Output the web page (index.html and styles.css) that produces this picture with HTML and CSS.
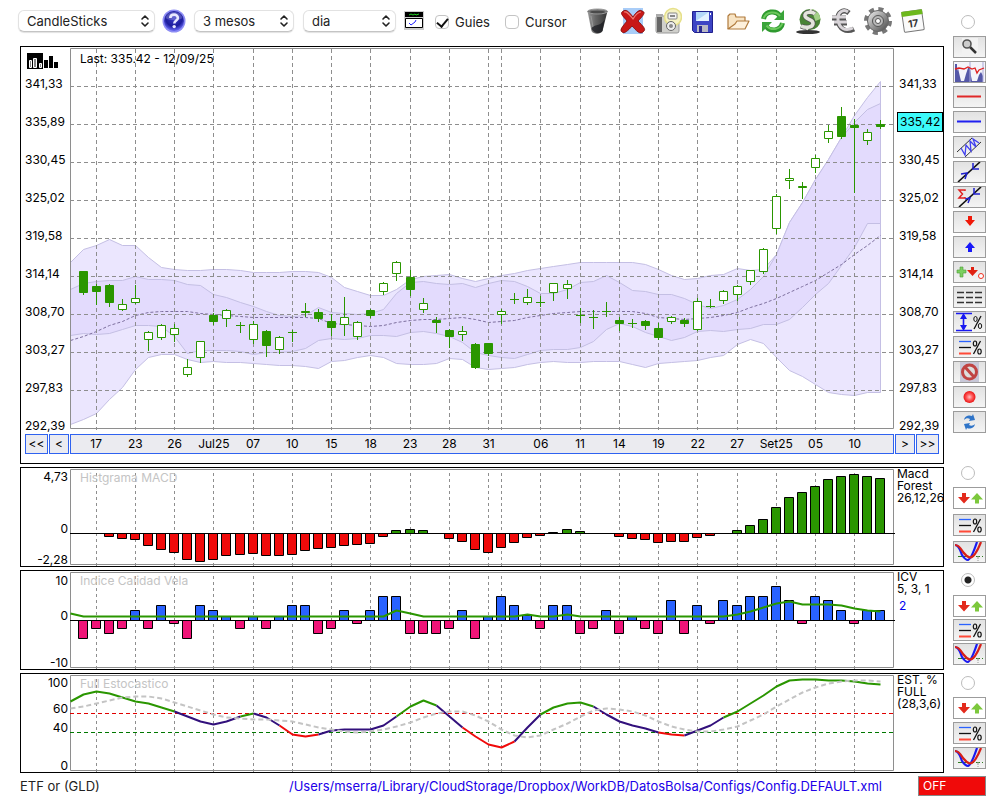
FILE: index.html
```
<!DOCTYPE html>
<html lang="ca">
<head>
    <meta charset="UTF-8">
    <meta name="viewport" content="width=device-width, initial-scale=1.0">
    <title>ETF or (GLD)</title>
    <link rel="stylesheet" href="styles.css">
</head>
<body>
    <!-- shared symbols -->
    <svg class="defs" width="0" height="0" aria-hidden="true">
        <defs>
            <linearGradient id="steel" x1="0" y1="0" x2="1" y2="1">
                <stop offset="0" stop-color="#f4f4f4"/><stop offset=".5" stop-color="#9a9a9a"/><stop offset="1" stop-color="#444"/>
            </linearGradient>
            <linearGradient id="bin" x1="0" x2="1">
                <stop offset="0" stop-color="#999"/><stop offset=".4" stop-color="#666"/><stop offset="1" stop-color="#333"/>
            </linearGradient>
            <linearGradient id="leaf" x1="0" y1="0" x2="0" y2="1">
                <stop offset="0" stop-color="#6fd05a"/><stop offset="1" stop-color="#1c8a1c"/>
            </linearGradient>
            <radialGradient id="ball" cx=".5" cy=".35" r=".6">
                <stop offset="0" stop-color="#3c3cc8"/><stop offset=".7" stop-color="#1c1c9c"/><stop offset="1" stop-color="#5c5ce8"/>
            </radialGradient>
            <radialGradient id="dot">
                <stop offset="0" stop-color="#ffc0c0"/><stop offset=".5" stop-color="#ff5a5a"/><stop offset="1" stop-color="#e81414"/>
            </radialGradient>
            <symbol id="chevrons" viewBox="0 0 10 14">
                <path d="M2 5 5 2l3 3M2 9l3 3 3-3" fill="none" stroke="#222" stroke-width="1.6" stroke-linecap="round" stroke-linejoin="round"/>
            </symbol>
            <symbol id="updown" viewBox="0 0 31 20">
                <path d="M8 5h4v4h4L10 15.500 4 9h4z" fill="#e32a1c"/>
                <path d="M21 15.500v-4h-4L23 5l6 6.500h-4v4z" fill="#7cc83c"/>
            </symbol>
            <symbol id="levels" viewBox="0 0 31 20">
                <path d="M5 4.500h12" stroke="#2a62ff" stroke-width="1.300"/>
                <path d="M5 10.500h12" stroke="#111" stroke-width="1.300"/>
                <path d="M5 16.500h12" stroke="#ff4a38" stroke-width="2"/>
                <path d="M26.500 4 19.500 17" stroke="#111" stroke-width="1.300"/>
                <ellipse cx="21" cy="6.500" rx="1.700" ry="2.500" fill="none" stroke="#111" stroke-width="1.200"/>
                <ellipse cx="25.500" cy="14.500" rx="1.700" ry="2.500" fill="none" stroke="#111" stroke-width="1.200"/>
            </symbol>
            <symbol id="curves" viewBox="0 0 31 20">
                <path d="M4 14.500h25" stroke="#2f7d1f" stroke-dasharray="4 2"/>
                <path d="M24 14v5" stroke="#999" stroke-dasharray="3 1"/>
                <path d="M1 3c4 0 5 5 7 10 2 3 4 5 6 5 3-1 6-9 9-18" fill="none" stroke="#1a1af0" stroke-width="2.200"/>
                <path d="M1 3c4 0 6 4 8 7 3 4 5 5 7 5.500 4 0 8-8 11-15.500" fill="none" stroke="#d82018" stroke-width="2.200"/>
            </symbol>
        </defs>
    </svg>

    <div class="app">
        <div class="workspace">
            <main class="main">
                <div class="toolbar">
                    <span class="picker picker-type">
                        <select aria-label="Tipus"><option>CandleSticks</option><option>Bars</option></select>
                        <svg><use href="#chevrons"/></svg>
                    </span>
                    <button class="tool" aria-label="Ajuda">
                        <svg width="24" height="24" viewBox="0 0 24 24">
                            <circle cx="12" cy="12" r="11.500" fill="#8c8cf4"/>
                            <circle cx="12" cy="12" r="10" fill="url(#ball)"/>
                            <path d="M3.500 9C5 1 19 1 20.500 9 16 12 8 12 3.500 9z" fill="#fff" opacity=".2"/>
                            <path d="M8.300 9c0-4.500 7.600-4.500 7.600 0 0 2.500-3.600 2.600-3.600 5.500" fill="none" stroke="#e8e8ff" stroke-width="2.600"/>
                            <circle cx="12.200" cy="17.600" r="1.700" fill="#e8e8ff"/>
                        </svg>
                    </button>
                    <span class="picker picker-range">
                        <select aria-label="Periode"><option>3 mesos</option><option>6 mesos</option></select>
                        <svg><use href="#chevrons"/></svg>
                    </span>
                    <span class="picker picker-step">
                        <select aria-label="Interval"><option>dia</option><option>setmana</option></select>
                        <svg><use href="#chevrons"/></svg>
                    </span>
                    <button class="tool" aria-label="Panells">
                        <svg width="20" height="19" viewBox="0 0 20 19">
                            <path d="M0 0h20v19H0z" fill="#ccc"/>
                            <path d="M1 1h18v5H1z" fill="#000"/>
                            <path d="M5 4l2-1 2 1 2-1 1 1 3-1" stroke="#1fd01f" fill="none"/>
                            <path d="M1.500 7.500h17v9h-17z" fill="#fff" stroke="#000"/>
                            <path d="M5 12l2 2 4-3 1-2" stroke="#2020ff" fill="none"/>
                        </svg>
                    </button>
                    <label class="check check-guides"><input type="checkbox" checked> Guies</label>
                    <label class="check"><input type="checkbox"> Cursor</label>

                    <div class="actions">
                        <button class="tool" aria-label="Paperera">
                            <svg width="28" height="28" viewBox="0 0 28 28">
                                <path d="M3.500 4l4 20c2 3.500 9 3.500 11 0l5-20z" fill="url(#bin)"/>
                                <path d="M7.500 22c2-6 7-1 13-9l-2 11c-3 3-8 3-11-2z" fill="#15171c" opacity=".7"/>
                                <ellipse cx="13.500" cy="4.500" rx="10" ry="2.500" fill="#777" stroke="#999"/>
                                <ellipse cx="13.500" cy="5" rx="7.500" ry="1.300" fill="#4a4a4a"/>
                                <path d="M7 9l2 11" stroke="#aaa" opacity=".6"/>
                            </svg>
                        </button>
                        <button class="tool" aria-label="Esborra">
                            <svg width="28" height="28" viewBox="0 0 28 28">
                                <path d="M4 1h20v26H4z" fill="#a9cdf8"/>
                                <path d="M3 5c4-4 7 0 11 5 3-5 7-8 9-6 4 1 2 4-4 10 5 5 8 8 6 10-4 5-8-1-12-5-4 5-8 8-10 6-3-2 1-6 5-11C5 10 1 7 3 5z" fill="#c81818" stroke="#7c0808" stroke-width=".8"/>
                                <path d="M5 5c3-1 5 2 9 7 3-5 6-7 8-7" fill="none" stroke="#ee7a70" stroke-width="1.200"/>
                            </svg>
                        </button>
                        <button class="tool" aria-label="Captura">
                            <svg width="28" height="28" viewBox="0 0 28 28">
                                <rect x="2" y="9" width="23" height="17" rx="2" fill="#d0d0cc" stroke="#999"/>
                                <path d="M3 10h5v15H3z" fill="#666"/>
                                <path d="M2 7h7v2H2z" fill="#aaa"/>
                                <circle cx="19" cy="10" r="8.500" fill="#f6f3c4" stroke="#e6e08a" stroke-width="1.500"/>
                                <rect x="14" y="6" width="9" height="6" rx="1" fill="#f4f4f4" stroke="#888"/>
                                <path d="M16 8h5v2h-5z" fill="#888"/>
                                <circle cx="17" cy="19" r="4.500" fill="#eee" stroke="#666"/>
                                <circle cx="17" cy="19" r="2" fill="#888"/>
                            </svg>
                        </button>
                        <button class="tool" aria-label="Desa">
                            <svg width="28" height="28" viewBox="0 0 28 28">
                                <path d="M3.500 4.500h20v21h-18l-2-2z" fill="#3c44c4" stroke="#20208c"/>
                                <path d="M7 5h13v9H7z" fill="#b4d8f8"/>
                                <path d="M7 14 20 5v9z" fill="#e4f2ff"/>
                                <path d="M8 18h11v7H8z" fill="#b8b8c4"/>
                                <path d="M10 19h3v6h-3z" fill="#2a2a90"/>
                                <path d="M21 6h1v2h-1z" fill="#fff"/>
                            </svg>
                        </button>
                        <button class="tool" aria-label="Obre">
                            <svg width="28" height="28" viewBox="0 0 28 28" stroke="#b07a3c" stroke-width="1.200" stroke-linejoin="round">
                                <path d="M4 22V9l2-2h5l1 3h9v4" fill="#f8e4c4"/>
                                <path d="M4 22 11 17l2-3h12l-4 8z" fill="#fdf0dc"/>
                            </svg>
                        </button>
                        <button class="tool" aria-label="Actualitza">
                            <svg width="28" height="28" viewBox="0 0 28 28" fill="none">
                                <path d="M4.500 12C6 4 17 2.500 21 9M23.500 16C22 24 11 25.500 7 19" stroke="#2f9a2f" stroke-width="5"/>
                                <path d="M25 3v10H15zM3 25V15h10z" fill="#3aa43a"/>
                                <path d="M4.500 11.500C7 4.500 17 3.500 21 9M23.500 16C21 23 12 24 7.500 18.500" stroke="#6cc85c" stroke-width="2"/>
                            </svg>
                        </button>
                        <button class="tool" aria-label="Dolar">
                            <svg width="28" height="28" viewBox="0 0 28 28" fill="none">
                                <ellipse cx="14" cy="25" rx="12" ry="2" fill="#333"/>
                                <circle cx="16" cy="12.500" r="10.500" fill="#4a8436"/>
                                <path d="M17 2a10.500 10.500 0 0 1 9.500 10l-5 2z" fill="#a4d088"/>
                                <path d="M21 7c-3-3-11-2-10 2 1 4 9 3 8 8-1 4-8 4-12 2" stroke="#555" stroke-width="5"/>
                                <path d="M21 7c-3-3-11-2-10 2 1 4 9 3 8 8-1 4-8 4-12 2" stroke="#e4e4dc" stroke-width="3.500"/>
                                <path d="M17 2l-1 4M14 19l-1 4" stroke="#e4e4dc" stroke-width="2"/>
                            </svg>
                        </button>
                        <button class="tool" aria-label="Euro">
                            <svg width="28" height="28" viewBox="0 0 28 28" fill="none">
                                <path d="M20 6C14 1 8 6 9 13c1 9 8 13 16 9M3 11h14M5 16h13" stroke="#555" stroke-width="5"/>
                                <path d="M19 5C14 1 8 6 9 13c1 8 7 12 15 8M3 10h14M5 15h13" stroke="#d8d4d8" stroke-width="3"/>
                            </svg>
                        </button>
                        <button class="tool" aria-label="Opcions">
                            <svg width="28" height="28" viewBox="0 0 28 28">
                                <circle cx="14" cy="14" r="12" fill="none" stroke="#777" stroke-width="4" stroke-dasharray="5 4.420"/>
                                <circle cx="14" cy="14" r="10.500" fill="url(#steel)" stroke="#666"/>
                                <circle cx="14" cy="14" r="5.500" fill="#b8b8b8" stroke="#555"/>
                                <circle cx="14" cy="14" r="2.500" fill="#fff" stroke="#555"/>
                            </svg>
                        </button>
                        <button class="tool" aria-label="Calendari">
                            <svg width="28" height="28" viewBox="0 0 28 28">
                                <g transform="rotate(-8 14 14)">
                                    <rect x="4" y="4" width="20" height="20" rx="1" fill="#fafafa" stroke="#777"/>
                                    <path d="M3.500 3.500h21v5h-21z" fill="#6cb81c"/>
                                    <text x="14" y="20" class="cal-day">17</text>
                                </g>
                            </svg>
                        </button>
                    </div>
                </div>

                <section class="panel">
                    <div class="axis axis-price">
                        <svg class="bars-logo" width="32" height="16" viewBox="0 0 32 16">
                            <path d="M0 0h16v16H0z"/>
                            <path d="M2.500 7.500h2v7h-2zM6.500 5.500h3v9h-3zM12.500 10.500h2v4h-2z" fill="#888" stroke="#fff"/>
                            <path d="M17 7h4v8h-4zM22 3h4v12h-4zM27 9h4v6h-4z"/>
                        </svg>
                        <span>341,33</span><span>335,89</span><span>330,45</span><span>325,02</span><span>319,58</span>
                        <span>314,14</span><span>308,70</span><span>303,27</span><span>297,83</span><span>292,39</span>
                    </div>
                    <div class="plot">
                        <p class="plot-title plot-title-last">Last: 335.42 - 12/09/25</p>
                        <svg id="price" class="price" viewBox="0 48 824 381" preserveAspectRatio="none"></svg>
                    </div>
                    <div class="axis axis-price axis-right">
                        <i></i>
                        <span>341,33</span><mark>335,42</mark><span>330,45</span><span>325,02</span><span>319,58</span>
                        <span>314,14</span><span>308,70</span><span>303,27</span><span>297,83</span><span>292,39</span>
                    </div>
                    <div class="pager pager-left">
                        <button class="page-far">&lt;&lt;</button>
                        <button>&lt;</button>
                    </div>
                    <div id="dates" class="dates"></div>
                    <div class="pager">
                        <button>&gt;</button>
                        <button class="page-far">&gt;&gt;</button>
                    </div>
                </section>

                <section class="panel">
                    <div class="axis axis-macd"><span>4,73</span><span>0</span><span>-2,28</span></div>
                    <div class="plot">
                        <p class="plot-title">Histgrama MACD</p>
                        <svg id="macd" class="study" viewBox="0 469 824 96" preserveAspectRatio="none"></svg>
                    </div>
                    <div class="legend">Macd<br>Forest<br>26,12,26</div>
                </section>

                <section class="panel">
                    <div class="axis axis-icv"><span>10</span><span>0</span><span>-10</span></div>
                    <div class="plot">
                        <p class="plot-title">Indice Calidad Vela</p>
                        <svg id="icv" class="study" viewBox="0 572 824 96" preserveAspectRatio="none"></svg>
                    </div>
                    <div class="legend">ICV<br>5, 3, 1<b>2</b></div>
                </section>

                <section class="panel">
                    <div class="axis axis-stoch"><span>100</span><span>60</span><span>40</span><span>0</span></div>
                    <div class="plot">
                        <p class="plot-title">Full Estocastico</p>
                        <svg id="stoch" class="study" viewBox="0 675 824 96" preserveAspectRatio="none"></svg>
                    </div>
                    <div class="legend">EST. %<br>FULL<br>(28,3,6)</div>
                </section>
            </main>

            <aside class="side">
                <div class="tools tools-draw">
                    <input type="radio" name="panel" aria-label="Preu">
                    <button aria-label="Zoom"><svg viewBox="0 0 31 20"><path d="M8 1h16v18H8z" fill="#f2f2f2"/><path d="M16 10l6 6" stroke="#333" stroke-width="2.500"/><circle cx="13" cy="7" r="4" fill="#ccc" stroke="#555" stroke-width="1.600"/></svg></button>
                    <button aria-label="Volum"><svg viewBox="0 0 31 20"><path d="M0 0h31v20H0z" fill="#f4f4fa"/><path d="M1 20V2h2v7l1-3 2 9 1 4 3 0 2-7 2-6 2 0 1 8 1 5 5 0 2-6 2-3 2 4v6z" fill="#5558a8"/><path d="M16 0v20M29 0v20" stroke="#aaa8d8"/><path d="M1 7l4-1 5 1 4-2 4 2 3-1 2 5 2-3 5-2" fill="none" stroke="#e02020" stroke-width="1.300"/></svg></button>
                    <button aria-label="Linia vermella"><svg viewBox="0 0 31 20"><path d="M3 9.500h24" stroke="#e02828" stroke-width="2"/></svg></button>
                    <button aria-label="Linia blava"><svg viewBox="0 0 31 20"><path d="M3 9.500h24" stroke="#2020f0" stroke-width="2"/></svg></button>
                    <button aria-label="Canal"><svg viewBox="0 0 31 20" fill="none"><path d="M3 15 18 1M11 20 27 5" stroke="#333"/><path d="M7 11l4 7 1-10 5 6-1-10 6 6-3-8 6 4" stroke="#4040f0" stroke-width="1.300"/></svg></button>
                    <button aria-label="Tendencia"><svg viewBox="0 0 31 20" fill="none"><path d="M4 20 26 0" stroke="#111" stroke-width="1.600"/><path d="M7 12l6-1-2 6M19 1v6h6" stroke="#2020d0" stroke-width="1.500"/></svg></button>
                    <button aria-label="Regressio"><svg viewBox="0 0 31 20" fill="none"><path d="M5 20 27 0" stroke="#111" stroke-width="1.600"/><path d="M11 12l5-1-2 5M20 1v6h6" stroke="#2020d0" stroke-width="1.500"/><path d="M11 4V3H5l3.500 4L5 11h6v-1" stroke="#e02020" stroke-width="1.500"/></svg></button>
                    <button aria-label="Venda"><svg viewBox="0 0 31 20"><path d="M14 4h4v4h3l-5 6-5-6h3z" fill="#f01808"/></svg></button>
                    <button aria-label="Compra"><svg viewBox="0 0 31 20"><path d="M14 15h4v-4h3l-5-6-5 6h3z" fill="#1818f8"/></svg></button>
                    <button aria-label="Senyals"><svg viewBox="0 0 31 20"><path d="M6 5h3v3h3v3H9v4H6v-4H3V8h3z" fill="#7cd060" stroke="#4a9a38" stroke-width=".6"/><path d="M17 5h3v3h4l-5.500 6L13 8h4z" fill="#e02010"/><circle cx="27" cy="14" r="2.500" fill="#fff" stroke="#f03020"/></svg></button>
                    <button aria-label="Suports"><svg viewBox="0 0 31 20"><path d="M3 5.500h25M3 10.500h25M3 15.500h25" stroke="#333" stroke-width="1.600" stroke-dasharray="7 2"/></svg></button>
                    <button aria-label="Distancia"><svg viewBox="0 0 31 20"><path d="M2 1.500h16M2 18.500h16M9.500 3v14" stroke="#1818f0" stroke-width="1.600"/><path d="M9.500 1 13 7H6zM9.500 19 13 13H6z" fill="#1818f0"/><path d="M27 4 20 17" stroke="#111" stroke-width="1.300"/><ellipse cx="21.500" cy="7" rx="1.700" ry="2.500" fill="none" stroke="#111"/><ellipse cx="26" cy="14" rx="1.700" ry="2.500" fill="none" stroke="#111"/></svg></button>
                    <button aria-label="Nivells"><svg><use href="#levels"/></svg></button>
                    <button aria-label="Prohibit"><svg viewBox="0 0 31 20"><path d="M6 0h19v20H6z" fill="#c8c8d8"/><circle cx="15.500" cy="10" r="7" fill="#ddd" stroke="#c04444" stroke-width="3"/><path d="M11 5l9 10" stroke="#c04444" stroke-width="3"/></svg></button>
                    <button aria-label="Grava"><svg viewBox="0 0 31 20"><circle cx="15.500" cy="10" r="6" fill="url(#dot)"/></svg></button>
                    <button aria-label="Recarrega"><svg viewBox="0 0 31 20" fill="#2f74c8"><path d="M10 8c1-5 6-5 8-4l1-2 2 6-6 1 1-2c-2-1-4-1-6 1z"/><path d="M21 12c-1 5-6 5-8 4l-1 2-2-6 6-1-1 2c2 1 4 1 6-1z"/></svg></button>
                </div>
                <div class="tools tools-macd">
                    <input type="radio" name="panel" aria-label="MACD">
                    <button class="plain" aria-label="Puja o baixa"><svg><use href="#updown"/></svg></button>
                    <button aria-label="Nivells"><svg><use href="#levels"/></svg></button>
                    <button aria-label="Corbes"><svg><use href="#curves"/></svg></button>
                </div>
                <div class="tools tools-icv">
                    <input type="radio" name="panel" aria-label="ICV" checked>
                    <button class="plain" aria-label="Puja o baixa"><svg><use href="#updown"/></svg></button>
                    <button aria-label="Nivells"><svg><use href="#levels"/></svg></button>
                    <button aria-label="Corbes"><svg><use href="#curves"/></svg></button>
                </div>
                <div class="tools tools-stoch">
                    <input type="radio" name="panel" aria-label="Estocastico">
                    <button class="plain" aria-label="Puja o baixa"><svg><use href="#updown"/></svg></button>
                    <button aria-label="Nivells"><svg><use href="#levels"/></svg></button>
                    <button aria-label="Corbes"><svg><use href="#curves"/></svg></button>
                </div>
            </aside>
        </div>

        <footer class="footer">
            <span>ETF or (GLD)</span>
            <a href="#">/Users/mserra/Library/CloudStorage/Dropbox/WorkDB/DatosBolsa/Configs/Config.DEFAULT.xml</a>
            <button class="off">OFF</button>
        </footer>
    </div>

    <script src="charts.js"></script>
</body>
</html>
```
FILE: styles.css
```
:root {
    --ink: #000;
    --grid: #8e8e8e;
    --candle: #2a9600;
    --blue: #2f62f0;
    --title: #c4c4c4;
}

* {
    box-sizing: border-box;
}

body {
    margin: 0;
    background: #fff;
    color: var(--ink);
    font-family: Inter, "Liberation Sans", sans-serif;
    font-size: 12px;
    line-height: 12px;
}

button,
select,
input {
    font: inherit;
    color: inherit;
    margin: 0;
}

.defs {
    position: absolute;
}

.app {
    padding: 0 14px 0 20px;
}

.workspace {
    display: flex;
    gap: 9px;
    align-items: flex-start;
}

.main {
    flex: 1;
    min-width: 0;
    display: flex;
    flex-direction: column;
    gap: 3px;
}

/* toolbar */
.toolbar {
    display: flex;
    align-items: center;
    height: 41px;
    margin: 0 0 2px -2px;
    font-size: 13px;
    color: #222;
}

.picker {
    position: relative;
    flex: none;
}

.picker select {
    appearance: none;
    width: 100%;
    height: 22px;
    padding: 0 24px 0 8px;
    border: 1px solid #e2e2e2;
    border-bottom-color: #c4c4c4;
    border-radius: 6px;
    background: #fff;
    box-shadow: 0 1px 1px rgba(0, 0, 0, 0.12);
    display: block;
}

.picker svg {
    position: absolute;
    right: 5px;
    top: 4px;
    width: 10px;
    height: 14px;
    pointer-events: none;
}

.picker-type {
    width: 137px;
    margin-right: 7px;
}

.picker-range {
    width: 100px;
    margin: 0 9px 0 8px;
}

.picker-step {
    width: 93px;
    margin-right: 8px;
}

.tool {
    flex: none;
    padding: 0;
    border: 0;
    background: none;
    display: block;
}

.tool svg {
    display: block;
}

.check {
    display: flex;
    align-items: center;
    gap: 6px;
    padding-top: 3px;
}

.check-guides {
    margin: 0 15px 0 11px;
}

.check input {
    appearance: none;
    width: 14px;
    height: 14px;
    border: 1px solid #c4c4c4;
    border-radius: 4px;
    background: #fff;
    display: grid;
    place-items: center;
}

.check input:checked::before {
    content: "";
    width: 5px;
    height: 9px;
    margin-top: -2px;
    border: solid #111;
    border-width: 0 2px 2px 0;
    transform: rotate(40deg);
}

.actions {
    display: flex;
    gap: 7px;
    margin-left: auto;
    margin-right: 17px;
}

.cal-day {
    font-size: 10px;
    font-weight: 700;
    text-anchor: middle;
    fill: #333;
}

/* chart panels */
.panel {
    display: grid;
    grid-template-columns: 49px 1fr 49px;
    border: 1px solid var(--ink);
}

.axis {
    display: grid;
    align-items: end;
    justify-items: end;
    padding-right: 2px;
}

.axis-price {
    grid-template-rows: 24px 19px repeat(9, 38px);
    justify-items: start;
    padding: 0 0 0 4px;
}

.bars-logo {
    margin: 0 0 2px 2px;
}

.axis-right {
    padding-left: 5px;
}

.axis-right mark {
    margin: 0 0 -4px -2px;
    padding: 3px 2px;
    border: 1px solid var(--ink);
    background: #3cfafa;
    color: inherit;
}

.axis-macd {
    grid-template-rows: 15px 52px 31px;
}

.axis-icv {
    grid-template-rows: 16px 35px 47px;
}

.axis-stoch {
    grid-template-rows: 15px 26px 19px 38px;
}

.plot {
    position: relative;
    padding-top: 1px;
}

.plot svg {
    display: block;
    width: 100%;
    overflow: visible;
}

.price {
    height: 381px;
}

.study {
    height: 96px;
}

.plot-title {
    position: absolute;
    left: 10px;
    top: 4px;
    margin: 0;
    color: var(--title);
}

.plot-title-last {
    top: 6px;
    color: var(--ink);
}

.legend {
    padding-left: 3px;
    overflow-x: clip;
    white-space: nowrap;
}

.legend b {
    display: block;
    margin: 5px 0 0 2px;
    color: #0000f0;
    font-weight: 400;
}

.pager,
.dates {
    height: 20px;
    margin: 2px 0 9px;
}

.pager {
    display: flex;
    gap: 1px;
    padding-left: 1px;
}

.pager-left {
    justify-content: flex-end;
    padding: 0 1px 0 0;
}

.pager button {
    width: 20px;
    padding: 0;
    border: 1px solid var(--blue);
    background: #ebebf0;
}

.pager .page-far {
    width: 23px;
}

.dates {
    display: grid;
    grid-template-columns: repeat(63, minmax(0, 1fr));
    background: #ebebf0;
    box-shadow: inset 0 0 0 1px var(--blue);
}

.dates span {
    grid-row: 1;
    display: flex;
    align-items: center;
    justify-content: center;
    white-space: nowrap;
}

/* drawing */
.plot svg * {
    vector-effect: non-scaling-stroke;
}

.frame {
    fill: none;
    stroke: var(--grid);
}

.guide {
    stroke: var(--grid);
    stroke-dasharray: 4 3;
}

.study .guide {
    stroke-dasharray: 3 3;
}

.band-outer {
    fill: #ebe6fe;
    stroke: #c4bfe4;
}

.band-inner {
    fill: #e3dbfd;
    stroke: #c4bfe4;
}

.average {
    fill: none;
    stroke: #7d6f9e;
    stroke-dasharray: 3 2;
}

.candle {
    fill: #fff;
    stroke: var(--candle);
}

.full {
    fill: var(--candle);
}

.bar {
    stroke: var(--ink);
}

.zero {
    stroke: var(--ink);
}

.line {
    fill: none;
    stroke-width: 2;
    stroke-linejoin: round;
}

.signal {
    fill: none;
    stroke: #c4c4c4;
    stroke-width: 2;
    stroke-dasharray: 5 3;
}

.limit {
    stroke-dasharray: 4 3;
}

/* side tools */
.side {
    width: 33px;
    flex: none;
    padding-top: 15px;
}

.tools {
    display: flex;
    flex-direction: column;
    align-items: center;
    gap: 3px;
}

.tools-macd {
    gap: 5px;
    margin-top: 33px;
}

.tools-icv {
    gap: 2px;
    margin-top: 10px;
}

.tools-stoch {
    margin-top: 11px;
}

.tools input {
    appearance: none;
    width: 14px;
    height: 14px;
    margin: 0 3px 4px 0;
    border: 1px solid #bcbcbc;
    border-radius: 50%;
    background: #fff;
}

.tools-macd input {
    margin-bottom: 2px;
}

.tools-icv input {
    margin-bottom: 6px;
}

.tools input:checked {
    background: radial-gradient(#222 0 3px, #fff 4px);
}

.tools button {
    width: 33px;
    height: 22px;
    padding: 0;
    border: 1px solid #9c9c9c;
    background: linear-gradient(#e2e2e2, #f4f4f4);
}

.tools .plain {
    background: #fff;
}

.tools svg {
    display: block;
    width: 31px;
    height: 20px;
}

/* status line */
.footer {
    display: flex;
    align-items: center;
    margin-top: 3px;
    height: 20px;
    color: #222;
    font-size: 13px;
}

.footer a {
    margin-left: auto;
    margin-right: 36px;
    color: #2000e8;
    text-decoration: none;
}

.off {
    width: 68px;
    height: 20px;
    padding: 0 4px;
    border: 1px solid #888;
    outline: 0;
    background: #f00a0a;
    color: #fff;
    font-size: 12px;
    text-align: left;
}
```
FILE: charts.js
```
const SLOT = 824 / 63;
const x = k => Math.floor(k * SLOT) + 0.5;

// session index -> label under the price chart (33 is the month change)
const dates = {
    2: '17', 5: '23', 8: '26', 11: 'Jul25', 14: '07', 17: '10', 20: '15', 23: '18',
    26: '23', 29: '28', 32: '31', 33: '', 36: '06', 39: '11', 42: '14', 45: '19',
    48: '22', 51: '27', 54: 'Set25', 57: '05', 60: '10'
};

// high, body top, body bottom, low, filled
const candles = [
    [271, 271, 293, 295, 1], [284, 286, 292, 305, 1], [284, 285, 303, 307, 1], [299, 304, 309, 311, 0],
    [285, 298, 302, 304, 0], [331, 332, 339, 351, 0], [324, 325, 337, 340, 0], [324, 328, 334, 342, 0],
    [359, 367, 374, 377, 0], [341, 341, 357, 363, 0], [313, 315, 322, 325, 1], [309, 310, 318, 327, 0],
    [322, 325, 325, 333, 0], [321, 324, 339, 344, 0], [330, 331, 346, 357, 1], [336, 337, 349, 354, 0],
    [330, 332, 332, 342, 0], [303, 311, 313, 317, 1], [309, 312, 319, 322, 1], [314, 321, 328, 336, 1],
    [297, 317, 324, 336, 0], [321, 322, 336, 340, 0], [309, 310, 316, 318, 1], [282, 283, 291, 295, 0],
    [261, 262, 273, 281, 0], [270, 277, 290, 296, 1], [298, 303, 309, 313, 0], [317, 320, 323, 333, 1],
    [329, 330, 337, 348, 1], [326, 331, 334, 341, 0], [343, 344, 368, 369, 1], [343, 343, 354, 356, 1],
    [309, 311, 314, 324, 0], [293, 299, 299, 304, 0], [289, 297, 302, 305, 0], [296, 302, 302, 307, 0],
    [283, 283, 292, 301, 0], [280, 284, 288, 299, 0], [308, 315, 315, 323, 0], [310, 317, 317, 329, 0],
    [302, 311, 311, 317, 0], [317, 320, 324, 331, 1], [319, 323, 323, 328, 0], [320, 321, 326, 330, 1],
    [323, 328, 338, 340, 1], [316, 317, 321, 324, 0], [318, 320, 324, 327, 1], [298, 301, 329, 331, 0],
    [299, 306, 306, 308, 0], [290, 291, 300, 304, 0], [285, 286, 294, 301, 0], [270, 270, 281, 285, 0],
    [248, 249, 271, 274, 0], [194, 196, 228, 234, 0], [169, 178, 180, 189, 0], [182, 186, 188, 199, 1],
    [155, 158, 167, 173, 0], [125, 131, 138, 143, 0], [107, 116, 137, 139, 1], [119, 125, 128, 193, 1],
    [129, 132, 140, 145, 0], [120, 124, 127, 129, 1]
];

const outerTop = [262, 249, 245, 239, 245, 245, 257, 267, 269, 270, 270, 269, 269, 270, 272, 272, 272, 271,
    271, 272, 277, 287, 291, 295, 295, 289, 279, 276, 275, 274, 278, 281, 278, 275, 273, 270, 268, 266, 264,
    262, 262, 262, 262, 262, 264, 269, 275, 279, 278, 275, 274, 268, 270, 269, 254, 222, 202, 179, 159, 137,
    115, 97, 81];
const innerTop = [289, 283, 281, 280, 280, 276, 279, 279, 280, 284, 285, 294, 297, 302, 306, 311, 315, 316,
    315, 307, 312, 313, 314, 313, 309, 293, 282, 281, 283, 284, 283, 287, 283, 280, 281, 286, 293, 293, 289,
    282, 281, 275, 282, 290, 291, 294, 294, 298, 304, 308, 305, 299, 289, 276, 254, 222, 202, 179, 159, 137,
    122, 109, 103];
const average = [340, 336, 331, 325, 321, 315, 312, 311, 311, 311, 313, 314, 315, 316, 317, 317, 317, 317,
    317, 318, 323, 324, 325, 326, 325, 322, 320, 319, 319, 318, 317, 319, 322, 321, 320, 317, 315, 313, 312,
    311, 311, 311, 311, 311, 313, 317, 318, 319, 318, 317, 315, 312, 307, 303, 298, 292, 286, 280, 272, 264,
    254, 245, 235];
const innerLow = [335, 333, 334, 333, 329, 325, 325, 326, 336, 353, 350, 350, 350, 351, 354, 352, 352, 351,
    348, 340, 338, 339, 338, 335, 335, 336, 332, 331, 333, 336, 342, 352, 355, 357, 358, 354, 350, 349, 349,
    347, 341, 329, 323, 326, 332, 336, 340, 337, 331, 330, 331, 329, 328, 324, 324, 319, 307, 294, 283, 265,
    247, 223, 223];
const outerLow = [424, 419, 413, 399, 387, 369, 357, 354, 354, 359, 362, 361, 362, 362, 363, 364, 365, 365,
    366, 368, 361, 360, 357, 355, 357, 363, 364, 364, 363, 358, 359, 367, 369, 368, 367, 364, 362, 361, 362,
    362, 361, 361, 361, 364, 367, 363, 362, 361, 360, 357, 355, 344, 339, 343, 357, 370, 376, 384, 392, 394,
    395, 392, 392];

const macd = [0, 0, -3, -5, -6, -12, -16, -19, -26, -28, -26, -22, -21, -20, -22, -22, -21, -17, -15, -14,
    -12, -11, -10, -3, 3, 4, 3, 0, -5, -8, -16, -19, -14, -9, -4, -2, 1, 4, 2, 0, 0, -3, -5, -6, -9, -8, -8,
    -4, -2, 0, 3, 8, 14, 26, 36, 41, 47, 54, 57, 59, 57, 55];

const icv = [-18, -8, -13, -8, 10, -8, 15, -3, -18, 15, 10, 4, -8, 4, -8, 4, 15, 15, -13, -8, 10, -3, 10, 24,
    24, -13, -13, -13, -8, 10, -18, 4, 24, 15, 5, -8, 15, 15, -13, -8, 10, -13, 4, -8, -13, 20, -13, 15, -3,
    20, 15, 24, 24, 34, 20, -3, 24, 20, 10, -3, 10, 10];
const icvLine = [613, 616, 616, 616, 616, 616, 616, 616, 616, 616, 616, 616, 616, 616, 616, 616, 616, 616,
    616, 616, 616, 616, 616, 616, 616, 610, 613, 616, 616, 616, 616, 616, 616, 616, 616, 614, 616, 616, 614,
    616, 616, 616, 616, 616, 616, 616, 616, 616, 616, 616, 616, 614, 611, 607, 603, 601, 604, 604, 604, 605,
    608, 610, 611];

const stoch = [701, 694, 691, 693, 697, 701, 703, 707, 711, 716, 721, 724, 721, 716, 713, 717, 725, 734, 736,
    734, 730, 729, 729, 729, 725, 716, 706, 700, 705, 716, 727, 736, 744, 747, 741, 727, 714, 707, 703, 702,
    706, 714, 721, 725, 728, 732, 734, 735, 730, 725, 717, 711, 703, 695, 686, 680, 679, 679, 680, 680, 681,
    683, 684];
const stochSignal = [708, 706, 703, 700, 697, 696, 696, 698, 702, 706, 710, 714, 717, 718, 719, 719, 720, 721,
    724, 727, 729, 731, 732, 731, 729, 726, 722, 717, 713, 711, 711, 715, 721, 729, 735, 737, 735, 729, 723,
    716, 710, 708, 709, 711, 715, 721, 726, 729, 731, 731, 729, 726, 720, 714, 706, 699, 692, 687, 683, 681,
    680, 680, 681];
// [colour, first, last]
const stochRuns = [
    ['#2a9600', 0, 8], ['#32107c', 8, 13], ['#2a9600', 13, 14], ['#32107c', 14, 16], ['#f00a0a', 16, 19],
    ['#32107c', 19, 25], ['#2a9600', 25, 28], ['#32107c', 28, 30], ['#f00a0a', 30, 34], ['#32107c', 34, 36],
    ['#2a9600', 36, 40], ['#32107c', 40, 45], ['#f00a0a', 45, 47], ['#32107c', 47, 50], ['#2a9600', 50, 62]
];

function points(values, first = 0) {
    return values.map((y, i) => `${x(first + i)},${y + 0.5}`);
}

function polyline(values, attrs, first) {
    return `<polyline points="${points(values, first).join(' ')}" ${attrs}/>`;
}

function band(top, low, cls) {
    return `<polygon points="${points(top).concat(points(low).reverse()).join(' ')}" class="${cls}"/>`;
}

function hline(y, attrs) {
    return `<line x1="0" x2="825" y1="${y + 0.5}" y2="${y + 0.5}" ${attrs}/>`;
}

function frame(top, height) {
    return `<rect x="0.5" y="${top + 0.5}" width="823" height="${height}" class="frame"/>`;
}

function guides(top, bottom) {
    return Object.keys(dates)
        .map(k => `<line x1="${x(k)}" x2="${x(k)}" y1="${top}" y2="${bottom}" class="guide"/>`)
        .join('');
}

function bars(values, zero, up, down) {
    return values.map((v, i) => {
        if (!v) return '';
        const left = x(i + 1) - 5;
        const top = v > 0 ? zero - v + 0.5 : zero + 0.5;
        return `<rect x="${left}" y="${top}" width="9" height="${Math.abs(v)}" fill="${v > 0 ? up : down}" class="bar"/>`;
    }).join('');
}

function candle([high, top, bottom, low, full], i) {
    const c = x(i + 1);
    const wick = `<line x1="${c}" x2="${c}" y1="${high}" y2="${low}" class="candle"/>`;
    if (top === bottom) {
        return wick + `<line x1="${c - 4.5}" x2="${c + 4.5}" y1="${top + 0.5}" y2="${top + 0.5}" class="candle"/>`;
    }
    const height = full ? bottom - top - 1 : bottom - top;
    return wick + `<rect x="${c - 4}" y="${top + 0.5}" width="8" height="${height}" class="candle ${full ? 'full' : ''}"/>`;
}

let priceGuides = '';
for (let y = 86; y < 428; y += 38) {
    priceGuides += hline(y, 'class="guide"');
}

document.getElementById('price').innerHTML =
    band(outerTop, outerLow, 'band-outer') +
    band(innerTop, innerLow, 'band-inner') +
    polyline(average, 'class="average"') +
    frame(48, 380) + guides(49, 430) + priceGuides +
    candles.map(candle).join('');

document.getElementById('macd').innerHTML =
    frame(469, 95) + guides(473, 566) +
    bars(macd, 533, '#2a9600', '#f00a0a') + hline(533, 'class="zero"');

document.getElementById('icv').innerHTML =
    frame(572, 95) + guides(576, 669) +
    bars(icv, 620, '#2962ff', '#f01478') + hline(620, 'class="zero"') +
    polyline(icvLine, 'class="line" stroke="#2a9600"');

document.getElementById('stoch').innerHTML =
    frame(675, 95) + guides(679, 772) +
    hline(713, 'class="limit" stroke="#e00000"') + hline(732, 'class="limit" stroke="#007800"') +
    stochRuns.map(([color, a, b]) => polyline(stoch.slice(a, b + 1), `class="line" stroke="${color}"`, a)).join('') +
    polyline(stochSignal, 'class="signal"');

document.getElementById('dates').innerHTML = Object.entries(dates)
    .filter(([, text]) => text)
    .map(([k, text]) => `<span style="grid-column: ${k} / span 2">${text}</span>`)
    .join('');
```
